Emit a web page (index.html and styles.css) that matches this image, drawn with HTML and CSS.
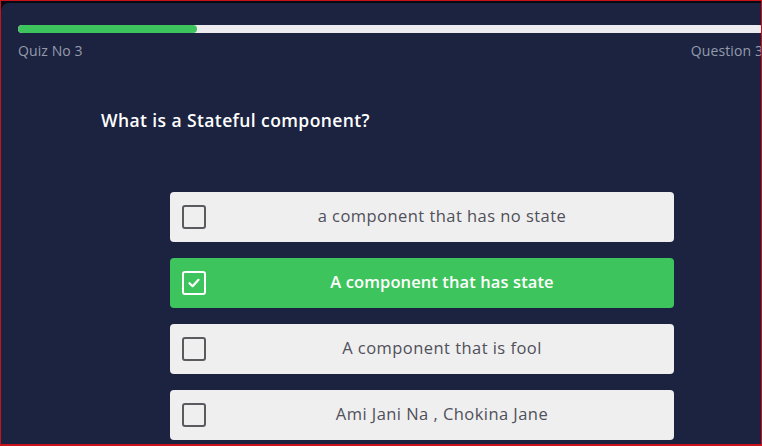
FILE: index.html
```html
<!DOCTYPE html>
<html>
<head>
<meta charset="utf-8">
<link rel="stylesheet" href="styles.css">
</head>
<body>
<div class="frame">
  <div class="card">
    <div class="progress"><div class="progress-fill" style="width:179px"></div></div>
    <div class="meta">
      <span>Quiz No 3</span>
      <span>Question 3</span>
    </div>
    <h2 class="question">What is a Stateful component?</h2>
    <div class="options">
      <div class="option">
        <span class="box"></span>
        <span class="label">a component that has no state</span>
      </div>
      <div class="option selected">
        <span class="box"><svg width="14" height="14" viewBox="0 0 14 14"><path d="M2.5 7.2 L5.6 10.2 L11.5 3.8" fill="none" stroke="#fff" stroke-width="2.2" stroke-linecap="round" stroke-linejoin="round"/></svg></span>
        <span class="label">A component that has state</span>
      </div>
      <div class="option">
        <span class="box"></span>
        <span class="label">A component that is fool</span>
      </div>
      <div class="option">
        <span class="box"></span>
        <span class="label">Ami Jani Na , Chokina Jane</span>
      </div>
    </div>
  </div>
</div>
</body>
</html>
```

FILE: styles.css
```css
* { box-sizing: border-box; }
html, body { margin: 0; padding: 0; }
body { background: #1b2340; font-family: "Open Sans", "Noto Sans", sans-serif; }
.frame {
  width: 762px;
  height: 446px;
  border: 1px solid #c8121c;
  border-bottom-width: 2px;
  background: #070914;
  overflow: hidden;
  padding-top: 2px;
}
.card {
  width: 780px;
  height: 460px;
  background: #1b2340;
  border-top-left-radius: 8px;
  padding: 22px 18px 0 17px;
}
.progress {
  height: 8px;
  border-radius: 4px;
  background: #ebebf0;
  overflow: hidden;
}
.progress-fill {
  height: 100%;
  background: #3ec45c;
  border-radius: 4px;
}
.meta {
  display: flex;
  justify-content: space-between;
  margin-top: 8px;
  font-size: 14px;
  line-height: 20px;
  color: #959bab;
  font-weight: 500;
  letter-spacing: 0.1px;
}
.question {
  margin: 47px 0 0 83px;
  font-size: 17.5px;
  font-weight: 600;
  line-height: 24px;
  color: #ffffff;
  letter-spacing: 0.4px;
}
.options {
  margin: 60px 0 0 152px;
  width: 504px;
  display: flex;
  flex-direction: column;
  gap: 16px;
}
.option {
  height: 50px;
  border-radius: 4px;
  background: #efefef;
  display: flex;
  align-items: center;
  padding: 0 12px;
  gap: 16px;
  color: #50505a;
  font-size: 16.5px;
  letter-spacing: 0.45px;
}
.option.selected {
  background: #3ec45c;
  color: #ffffff;
  font-weight: 600;
  letter-spacing: 0.1px;
}
.box {
  width: 24px;
  height: 24px;
  border: 2.5px solid #5a5a5f;
  border-radius: 3px;
  display: flex;
  align-items: center;
  justify-content: center;
  flex: none;
}
.selected .box { border-color: #ffffff; border-width: 2px; }
.label {
  flex: 1;
  text-align: center;
  padding-bottom: 3px;
}
```
